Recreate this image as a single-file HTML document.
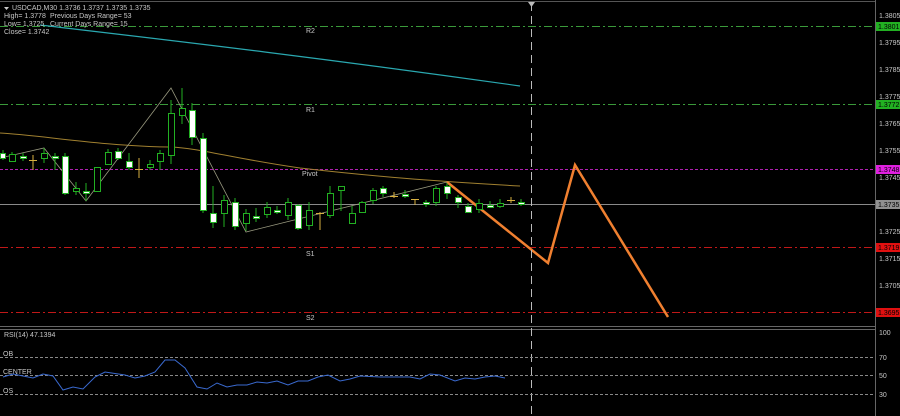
<!DOCTYPE html>
<html><head><meta charset="utf-8"><style>
html,body{margin:0;padding:0;background:#000;width:900px;height:416px;overflow:hidden}
svg{display:block}
text{font-family:"Liberation Sans",sans-serif;font-size:7px;fill:#c8c8c8}
</style></head><body>
<svg width="900" height="416" viewBox="0 0 900 416" xmlns="http://www.w3.org/2000/svg">
<rect width="900" height="416" fill="#000"/>
<!-- frame -->
<line x1="0" y1="1.5" x2="876" y2="1.5" stroke="#555" stroke-width="1"/>
<line x1="875.5" y1="0" x2="875.5" y2="416" stroke="#666" stroke-width="1"/>
<line x1="0" y1="326.5" x2="876" y2="326.5" stroke="#666"/>
<line x1="0" y1="329.5" x2="876" y2="329.5" stroke="#666"/>
<!-- level lines -->
<line x1="0" y1="26.5" x2="875" y2="26.5" stroke="#3a9a3a" stroke-dasharray="8,3,2,3"/>
<line x1="0" y1="104.5" x2="875" y2="104.5" stroke="#3a9a3a" stroke-dasharray="8,3,2,3"/>
<line x1="0" y1="169.5" x2="875" y2="169.5" stroke="#b020b0" stroke-dasharray="3,2"/>
<line x1="0" y1="204.5" x2="875" y2="204.5" stroke="#8a8a8a"/>
<line x1="0" y1="247.5" x2="875" y2="247.5" stroke="#c01818" stroke-dasharray="8,3,2,3"/>
<line x1="0" y1="312.5" x2="875" y2="312.5" stroke="#c01818" stroke-dasharray="8,3,2,3"/>
<text x="306" y="33">R2</text><text x="306" y="112">R1</text><text x="302" y="176">Pivot</text>
<text x="306" y="256">S1</text><text x="306" y="320">S2</text>
<!-- MAs -->
<path d="M40,25 C150,38 300,55 520,86" stroke="#2aa8b0" stroke-width="1.2" fill="none"/>
<path d="M0,133 C40,135 100,146 170,147 C200,148 230,158 300,168 C370,176 430,181 520,186" stroke="#a08030" stroke-width="1" fill="none"/>
<!-- zigzag -->
<polyline points="0,158 44,148 86,201 171,88 246,232 447,182" stroke="#9a9a80" stroke-width="0.8" fill="none"/>
<polyline points="447,182 548,263 575,165 668,317" stroke="#f08030" stroke-width="2.5" fill="none" stroke-linejoin="miter"/>
<!-- candles -->
<g stroke="#22b022" stroke-width="1">
<g fill="#fff">
<line x1="3" y1="150" x2="3" y2="160"/><rect x="0.5" y="153.5" width="5" height="5"/>
</g>
<g id="c">
<line x1="12" y1="152" x2="12" y2="162"/><rect x="9.5" y="154.5" width="6" height="7" fill="#000"/>
<line x1="23" y1="153" x2="23" y2="161"/><rect x="20.5" y="156.5" width="6" height="2" fill="#fff"/>
<line x1="44" y1="148" x2="44" y2="163"/><rect x="41.5" y="153.5" width="6" height="5" fill="#000"/>
<line x1="55" y1="153" x2="55" y2="170"/><rect x="52.5" y="156.5" width="6" height="2" fill="#fff"/>
<line x1="65" y1="153" x2="65" y2="195"/><rect x="62.5" y="156.5" width="6" height="37" fill="#fff"/>
<line x1="76" y1="182" x2="76" y2="195"/><rect x="73.5" y="188.5" width="6" height="3" fill="#000"/>
<line x1="86" y1="183" x2="86" y2="201"/><rect x="83.5" y="191.5" width="6" height="2" fill="#fff"/>
<line x1="97" y1="167" x2="97" y2="192"/><rect x="94.5" y="167.5" width="6" height="24" fill="#000"/>
<line x1="108" y1="149" x2="108" y2="165"/><rect x="105.5" y="152.5" width="6" height="12" fill="#000"/>
<line x1="118" y1="148" x2="118" y2="160"/><rect x="115.5" y="151.5" width="6" height="7" fill="#fff"/>
<line x1="129" y1="153" x2="129" y2="170"/><rect x="126.5" y="161.5" width="6" height="6" fill="#fff"/>
<line x1="150" y1="160" x2="150" y2="170"/><rect x="147.5" y="164.5" width="6" height="3" fill="#000"/>
<line x1="160" y1="150" x2="160" y2="170"/><rect x="157.5" y="153.5" width="6" height="8" fill="#000"/>
<line x1="171" y1="100" x2="171" y2="164"/><rect x="168.5" y="113.5" width="6" height="42" fill="#000"/>
<line x1="182" y1="88" x2="182" y2="124"/><rect x="179.5" y="108.5" width="6" height="7" fill="#000"/>
<line x1="192" y1="103" x2="192" y2="145"/><rect x="189.5" y="110.5" width="6" height="27" fill="#fff"/>
<line x1="203" y1="133" x2="203" y2="213"/><rect x="200.5" y="138.5" width="6" height="72" fill="#fff"/>
<line x1="213" y1="186" x2="213" y2="228"/><rect x="210.5" y="213.5" width="6" height="9" fill="#fff"/>
<line x1="224" y1="195" x2="224" y2="227"/><rect x="221.5" y="200.5" width="6" height="13" fill="#000"/>
<line x1="235" y1="198" x2="235" y2="230"/><rect x="232.5" y="202.5" width="6" height="24" fill="#fff"/>
<line x1="246" y1="209" x2="246" y2="231"/><rect x="243.5" y="213.5" width="6" height="10" fill="#000"/>
<line x1="256" y1="208" x2="256" y2="222"/><rect x="253.5" y="216.5" width="6" height="2" fill="#fff"/>
<line x1="267" y1="202" x2="267" y2="218"/><rect x="264.5" y="207.5" width="6" height="7" fill="#000"/>
<line x1="277" y1="206" x2="277" y2="214"/><rect x="274.5" y="210.5" width="6" height="2" fill="#fff"/>
<line x1="288" y1="198" x2="288" y2="220"/><rect x="285.5" y="202.5" width="6" height="13" fill="#000"/>
<line x1="298" y1="204" x2="298" y2="230"/><rect x="295.5" y="205.5" width="6" height="23" fill="#fff"/>
<line x1="309" y1="202" x2="309" y2="230"/><rect x="306.5" y="210.5" width="6" height="15" fill="#000"/>
<line x1="330" y1="186" x2="330" y2="218"/><rect x="327.5" y="193.5" width="6" height="22" fill="#000"/>
<line x1="341" y1="186" x2="341" y2="211"/><rect x="338.5" y="186.5" width="6" height="4" fill="#000"/>
<line x1="352" y1="206" x2="352" y2="224"/><rect x="349.5" y="213.5" width="6" height="10" fill="#000"/>
<line x1="362" y1="201" x2="362" y2="213"/><rect x="359.5" y="202.5" width="6" height="10" fill="#000"/>
<line x1="373" y1="188" x2="373" y2="204"/><rect x="370.5" y="190.5" width="6" height="10" fill="#000"/>
<line x1="383" y1="186" x2="383" y2="197"/><rect x="380.5" y="188.5" width="6" height="5" fill="#fff"/>
<line x1="405" y1="190" x2="405" y2="198"/><rect x="402.5" y="194.5" width="6" height="2" fill="#fff"/>
<line x1="426" y1="200" x2="426" y2="207"/><rect x="423.5" y="202.5" width="6" height="2" fill="#fff"/>
<line x1="436" y1="186" x2="436" y2="206"/><rect x="433.5" y="188.5" width="6" height="14" fill="#000"/>
<line x1="447" y1="183" x2="447" y2="199"/><rect x="444.5" y="186.5" width="6" height="7" fill="#fff"/>
<line x1="458" y1="195" x2="458" y2="208"/><rect x="455.5" y="197.5" width="6" height="5" fill="#fff"/>
<line x1="468" y1="203" x2="468" y2="213"/><rect x="465.5" y="206.5" width="6" height="6" fill="#fff"/>
<line x1="479" y1="199" x2="479" y2="213"/><rect x="476.5" y="203.5" width="6" height="6" fill="#000"/>
<line x1="490" y1="201" x2="490" y2="208"/><rect x="487.5" y="205.5" width="6" height="2" fill="#fff"/>
<line x1="500" y1="199" x2="500" y2="208"/><rect x="497.5" y="203.5" width="6" height="3" fill="#000"/>
<line x1="521" y1="199" x2="521" y2="206"/><rect x="518.5" y="202.5" width="6" height="2" fill="#fff"/>
</g>
</g>
<g stroke="#d8b040" stroke-width="1">
<line x1="33" y1="155" x2="33" y2="170"/><line x1="29" y1="160.5" x2="37" y2="160.5"/>
<line x1="139" y1="158" x2="139" y2="178"/><line x1="135" y1="169.5" x2="143" y2="169.5"/>
<line x1="320" y1="212" x2="320" y2="230"/><line x1="316" y1="213.5" x2="324" y2="213.5"/>
<line x1="394" y1="192" x2="394" y2="198"/><line x1="390" y1="196.5" x2="398" y2="196.5"/>
<line x1="415" y1="199" x2="415" y2="205"/><line x1="411" y1="199.5" x2="419" y2="199.5"/>
<line x1="511" y1="197" x2="511" y2="203"/><line x1="507" y1="200.5" x2="515" y2="200.5"/>
</g>
<!-- vertical dashed -->
<line x1="531.5" y1="3" x2="531.5" y2="416" stroke="#bbb" stroke-dasharray="8,5"/>
<path d="M528,2 L535,2 L531.5,7 Z" fill="#bbb"/>
<!-- header text -->
<path d="M4,7 L9,7 L6.5,10 Z" fill="#ccc"/>
<text x="12" y="10">USDCAD,M30  1.3736 1.3737 1.3735 1.3735</text>
<text x="4" y="18">High= 1.3778</text><text x="50" y="18">Previous Days Range= 53</text>
<text x="4" y="26">Low= 1.3725</text><text x="50" y="26">Current Days Range= 15</text>
<text x="4" y="34">Close= 1.3742</text>
<!-- price scale -->
<g>
<text x="879" y="18">1.3805</text><text x="879" y="45">1.3795</text><text x="879" y="72">1.3785</text>
<text x="879" y="99">1.3775</text><text x="879" y="126">1.3765</text><text x="879" y="153">1.3755</text>
<text x="879" y="180">1.3745</text><text x="879" y="234">1.3725</text><text x="879" y="261">1.3715</text>
<text x="879" y="288">1.3705</text>
</g>
<rect x="876" y="22" width="24" height="9" fill="#22b022"/><text x="878" y="29" style="fill:#000">1.3801</text>
<rect x="876" y="100" width="24" height="9" fill="#22b022"/><text x="878" y="107" style="fill:#000">1.3772</text>
<rect x="876" y="165" width="24" height="9" fill="#e020e0"/><text x="878" y="172" style="fill:#000">1.3748</text>
<rect x="876" y="200" width="24" height="9" fill="#909090"/><text x="878" y="207" style="fill:#000">1.3735</text>
<rect x="876" y="243" width="24" height="9" fill="#e01010"/><text x="878" y="250" style="fill:#000">1.3719</text>
<rect x="876" y="308" width="24" height="9" fill="#e01010"/><text x="878" y="315" style="fill:#000">1.3695</text>
<!-- RSI -->
<text x="4" y="337">RSI(14) 47.1394</text>
<line x1="0" y1="357.5" x2="875" y2="357.5" stroke="#888" stroke-dasharray="3,2"/>
<line x1="0" y1="375.5" x2="875" y2="375.5" stroke="#888" stroke-dasharray="3,2"/>
<line x1="0" y1="394.5" x2="875" y2="394.5" stroke="#888" stroke-dasharray="3,2"/>
<text x="3" y="356">OB</text><text x="3" y="374">CENTER</text><text x="3" y="393">OS</text>
<text x="879" y="335">100</text><text x="879" y="360">70</text><text x="879" y="378">50</text><text x="879" y="397">30</text>
<polyline fill="none" stroke="#3a6ad0" stroke-width="1" points="3,377 13,374 33,378 43,374 53,376 63,390 73,387 83,389 95,377 105,372 125,375 135,378 145,376 155,372 165,360 175,360 185,368 197,387 207,389 217,383 227,387 237,385 247,385 257,382 267,383 277,381 288,385 298,381 308,381 318,377 328,375 340,381 350,379 360,376 380,377 410,377 420,379 430,374 440,375 455,381 465,378 475,379 485,377 495,376 505,378"/>
</svg>
</body></html>
